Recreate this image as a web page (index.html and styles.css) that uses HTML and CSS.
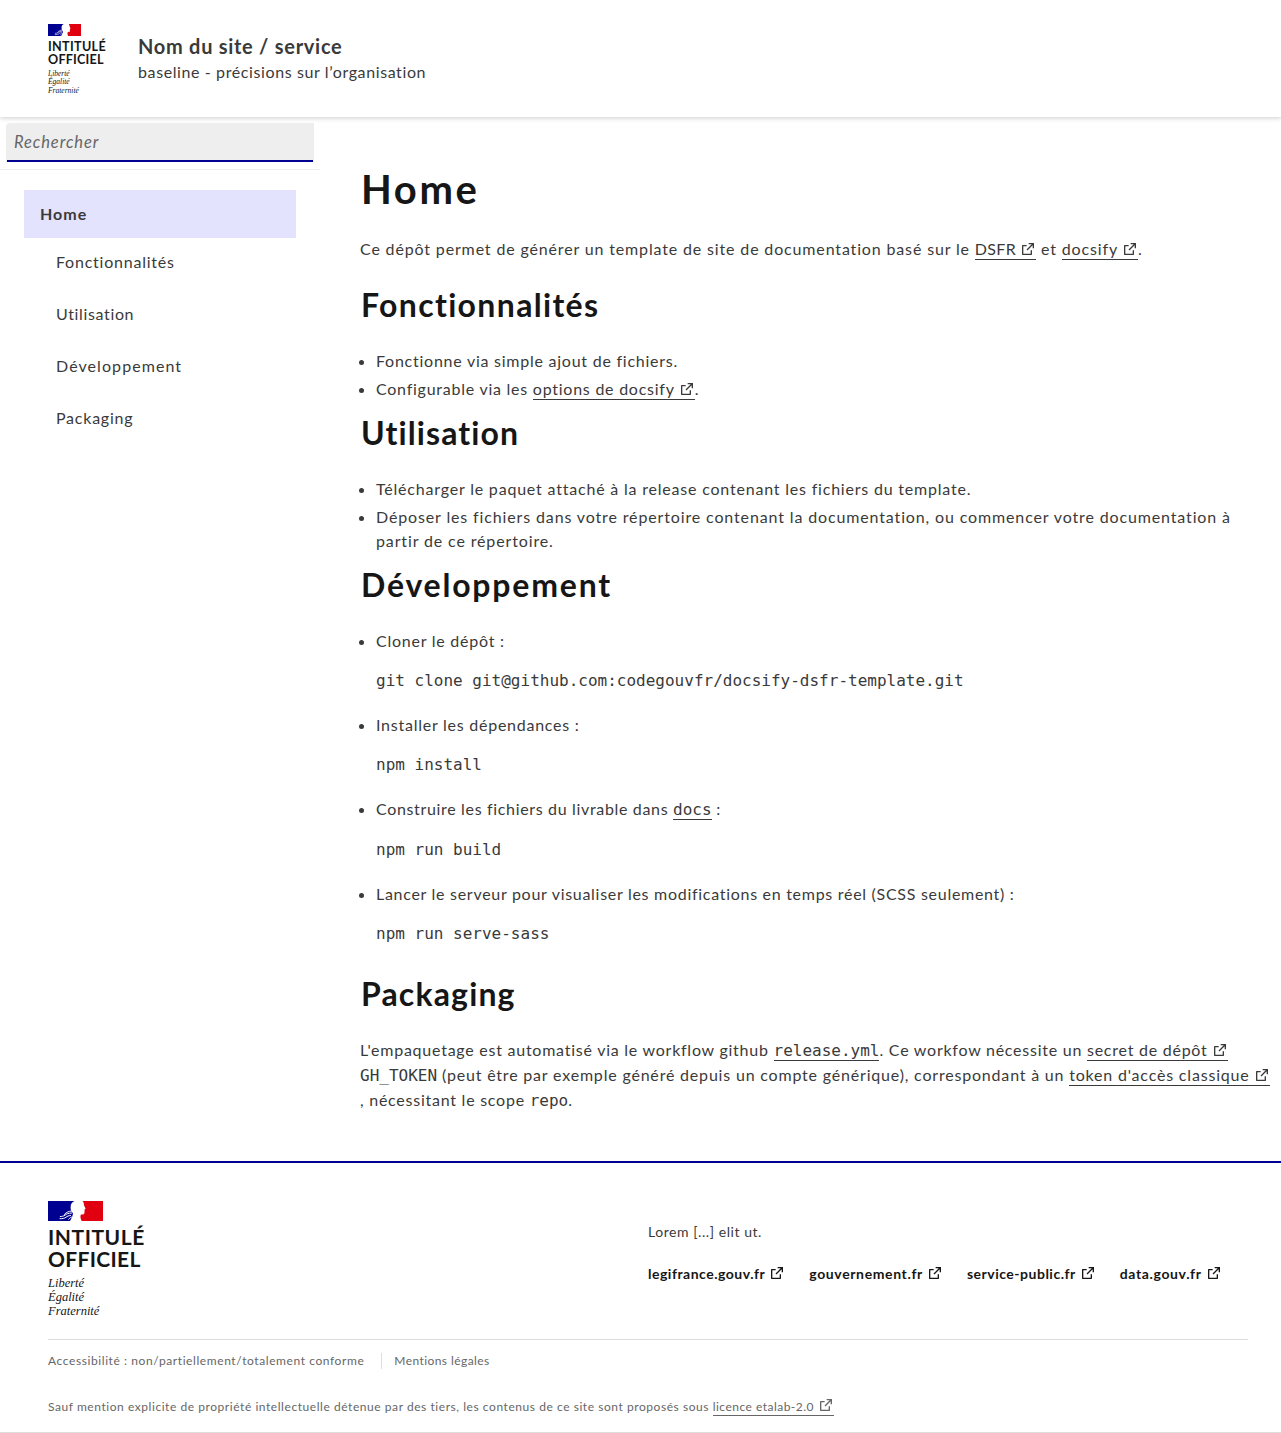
FILE: index.html
```html
<!DOCTYPE html>
<html lang="fr">
<head>
<meta charset="utf-8">
<title>Nom du site / service</title>
<link rel="stylesheet" href="styles.css">
</head>
<body>
<svg class="sprite" aria-hidden="true">
  <symbol id="ext" viewBox="0 0 24 24"><path d="M10 6v2H5v11h11v-5h2v6a1 1 0 0 1-1 1H4a1 1 0 0 1-1-1V7a1 1 0 0 1 1-1h6Zm11-3v8h-2V6.413l-7.793 7.794-1.414-1.414L17.585 5H13V3h8Z"/></symbol>
  <symbol id="flag" viewBox="0 0 55 20">
    <path fill="#fff" d="M0 0h55v20H0z"/>
    <path fill="#000091" d="M0 0h26.500C24 1.200 22.800 3 22.700 5c-.2 2 0 3.500.6 5l1.700 2.500-.8 3.500L22 20H0z"/>
    <path fill="none" stroke="#fff" stroke-width="1" stroke-linecap="round" d="M23.500 10c-3 .4-5 1.200-7 3.300M23.500 12c-3 .2-4.800.8-6.500 2.200-1.500 1-3 1.300-4.700 1.300M22.500 14.500c-2 .1-3.200.8-4.500 1.800-1.500 1-3.500 1.400-6 1.400M24 16c-1.200.2-2.200 1.100-3.300 2.200"/>
    <path fill="#e1000f" d="M55 0H34.500c.9.900 1.400 2.200 1.400 3.500.2 1.400 1 2.700 1.700 4.200-.2.600-1 .7-1.200 1 .3.800.4 1.500 0 2.200.2.800-.1 1.300-.3 2-.6.700-2 .4-3.200.7-.9 1.800-.4 4 .8 6.400H55z"/>
  </symbol>
</svg>
<header class="header">
  <div class="logo">
    <svg class="flag"><use href="#flag"/></svg>
    <p class="official"><span>INTITULÉ</span><span class="second">OFFICIEL</span></p>
    <p class="motto">Liberté<br>Égalité<br>Fraternité</p>
  </div>
  <div>
    <p class="site-name">Nom du site / service</p>
    <p class="baseline">baseline - précisions sur l’organisation</p>
  </div>
</header>
<div class="layout">
  <aside class="sidebar">
    <div class="search"><input class="search-input" type="search" placeholder="Rechercher"></div>
    <nav class="nav">
      <a class="nav-home">Home</a>
      <a class="nav-sub">Fonctionnalités</a>
      <a class="nav-sub nav-tight">Utilisation</a>
      <a class="nav-sub nav-wide">Développement</a>
      <a class="nav-sub">Packaging</a>
    </nav>
  </aside>
  <main class="content">
    <h1>Home</h1>
    <p class="intro">Ce dépôt permet de générer un template de site de documentation basé sur le <a class="link link-dsfr">DSFR<svg class="ext"><use href="#ext"/></svg></a> et <a class="link">docsify<svg class="ext"><use href="#ext"/></svg></a>.</p>
    <h2>Fonctionnalités</h2>
    <ul>
      <li>Fonctionne via simple ajout de fichiers.</li>
      <li>Configurable via les <a class="link">options de docsify<svg class="ext"><use href="#ext"/></svg></a>.</li>
    </ul>
    <h2 class="h-use">Utilisation</h2>
    <ul>
      <li class="li-download">Télécharger le paquet attaché à la release contenant les fichiers du template.</li>
      <li class="li-drop">Déposer les fichiers dans votre répertoire contenant la documentation, ou commencer votre documentation à<br>partir de ce répertoire.</li>
    </ul>
    <h2 class="h-dev">Développement</h2>
    <ul>
      <li>Cloner le dépôt :<pre>git clone git@github.com:codegouvfr/docsify-dsfr-template.git</pre></li>
      <li>Installer les dépendances :<pre>npm install</pre></li>
      <li class="li-build">Construire les fichiers du livrable dans <a class="link"><code>docs</code></a> :<pre>npm run build</pre></li>
      <li class="li-serve">Lancer le serveur pour visualiser les modifications en temps réel (SCSS seulement) :<pre>npm run serve-sass</pre></li>
    </ul>
    <h2 class="h-pack">Packaging</h2>
    <p class="pack">L'empaquetage est automatisé via le workflow github <a class="link"><code>release.yml</code></a>. Ce workfow nécessite un <a class="link">secret de dépôt<svg class="ext"><use href="#ext"/></svg></a><br><span class="pack-token"><code>GH_TOKEN</code> (peut être par exemple généré depuis un compte générique), correspondant à un <a class="link">token d'accès classique<svg class="ext"><use href="#ext"/></svg></a></span><br>, nécessitant le scope <code>repo</code>.</p>
  </main>
</div>
<footer class="footer">
  <div class="footer-body">
    <div class="logo logo-lg">
      <svg class="flag"><use href="#flag"/></svg>
      <p class="official"><span>INTITULÉ</span><span class="second">OFFICIEL</span></p>
      <p class="motto">Liberté<br>Égalité<br>Fraternité</p>
    </div>
    <div class="footer-content">
      <p class="footer-desc">Lorem [...] elit ut.</p>
      <div class="footer-links">
        <a>legifrance.gouv.fr<svg class="ext"><use href="#ext"/></svg></a>
        <a class="wide">gouvernement.fr<svg class="ext"><use href="#ext"/></svg></a>
        <a>service-public.fr<svg class="ext"><use href="#ext"/></svg></a>
        <a class="wide">data.gouv.fr<svg class="ext"><use href="#ext"/></svg></a>
      </div>
    </div>
  </div>
  <div class="footer-bottom">
    <div class="legal-links"><a>Accessibilité : non/partiellement/totalement conforme</a><a>Mentions légales</a></div>
    <p class="licence">Sauf mention explicite de propriété intellectuelle détenue par des tiers, les contenus de ce site sont proposés sous <a class="link">licence etalab-2.0<svg class="ext"><use href="#ext"/></svg></a></p>
  </div>
</footer>
</body>
</html>
```
FILE: styles.css
```css
* { box-sizing: border-box; }
body {
  margin: 0;
  background: #fff;
  color: #3a3a3a;
  font: 16px/24px Lato, "Liberation Sans", sans-serif;
  letter-spacing: .047em;
  font-variant-ligatures: none;
}
p, h1, h2, ul, pre { margin: 0; }
.sprite { display: none; }

.header {
  position: relative;
  display: flex;
  height: 117px;
  padding: 24px 48px 0;
  background: #fff;
  box-shadow: 0 1px 5px rgba(0, 0, 18, .2);
}
.header .logo { width: 90px; }
.flag { display: block; width: 33px; height: 12px; }
.official {
  margin-top: 4px;
  color: #161616;
  font-weight: 700;
  font-size: 12.6px;
  line-height: 13px;
  letter-spacing: .026em;
}
.official span { display: block; }
.official .second { letter-spacing: .016em; }
.motto {
  margin-top: 4px;
  color: #161616;
  font: italic 7.5px/8.4px "Liberation Serif", serif;
  letter-spacing: 0;
}
.logo-lg .flag { width: 55px; height: 20px; }
.logo-lg .official { margin-top: 5px; font-size: 21px; line-height: 22px; }
.logo-lg .motto { margin-top: 6px; font-size: 12.5px; line-height: 14px; }
.site-name { margin-top: 8px; font-size: 20px; line-height: 28px; font-weight: 700; letter-spacing: .036em; }
.baseline { letter-spacing: .038em; }

.layout { display: flex; height: 1044px; }
.sidebar { width: 320px; flex: none; }
.search { height: 53px; padding: 6px; border-bottom: 1px solid #eee; }
.search-input {
  display: block;
  width: 308px;
  height: 39px;
  padding: 0 7px 2px;
  border: 1px solid #eee;
  border-bottom: 0;
  border-radius: 4px 0 0 0;
  background: #eee;
  box-shadow: inset 0 -2px #000091;
  font: inherit;
  font-size: 16.5px;
  letter-spacing: .055em;
  appearance: none;
  outline: 0;
}
.search-input::placeholder { color: #666; font-style: italic; opacity: 1; }
.nav { display: flex; flex-direction: column; padding: 20px 24px; }
.nav-home { padding: 12px 16px; background: #e3e3fd; font-weight: 700; letter-spacing: .065em; }
.nav-sub { padding: 12px 32px; margin-bottom: 4px; letter-spacing: .048em; }
.nav-tight { letter-spacing: .04em; }
.nav-wide { letter-spacing: .067em; }

.content { flex: 1; padding: 48px 0 0 40px; white-space: nowrap; }
h1, h2 { padding-left: 1px; color: #161616; font-weight: 700; margin-bottom: 24px; }
h1 { font-size: 40px; line-height: 48px; letter-spacing: .066em; }
h2 { font-size: 32px; line-height: 40px; letter-spacing: .042em; }
.h-use { letter-spacing: .034em; }
.h-dev { letter-spacing: .056em; }
.h-pack { letter-spacing: .036em; }
.intro { margin-bottom: 24px; letter-spacing: .053em; }
.link-dsfr { letter-spacing: .02em; }
ul { padding-left: 16px; margin-bottom: 8px; }
li { padding-bottom: 4px; }
.li-download { letter-spacing: .05em; }
.li-drop { letter-spacing: .054em; }
.li-build { letter-spacing: .0415em; }
.li-serve { letter-spacing: .0445em; }
pre, code { font-family: "DejaVu Sans Mono", monospace; font-size: 16px; letter-spacing: 0; }
pre { margin: 16px 0; }
.li-build pre { margin-top: 17px; }
code { line-height: 20px; }
.pack { margin-top: -1px; line-height: 25px; }
.pack-token { letter-spacing: .0505em; }
.link { box-shadow: 0 1px #3a3a3a; padding-bottom: 1px; }
.ext { width: 16px; height: 16px; margin-left: 4px; fill: currentColor; vertical-align: -2px; }

.footer { height: 272px; border-top: 2px solid #000091; border-bottom: 1px solid #ddd; padding: 38px 33px 0 48px; }
.footer-body { display: flex; height: 138px; }
.logo-lg { width: 600px; }
.footer-content { padding-top: 19px; font-size: 14px; white-space: nowrap; }
.footer-desc { letter-spacing: .04em; }
.footer-links { display: flex; gap: 24px; margin-top: 18px; color: #161616; font-weight: 700; letter-spacing: .036em; }
.footer-links .wide { letter-spacing: .045em; }
.footer-bottom { border-top: 1px solid #ddd; color: #666; font-size: 12px; line-height: 20px; white-space: nowrap; }
.legal-links { display: flex; align-items: center; padding-top: 13px; line-height: 16px; letter-spacing: .049em; }
.legal-links a + a { margin-left: 17px; padding-left: 12px; border-left: 1px solid #ddd; letter-spacing: .035em; }
.licence { margin-top: 28px; letter-spacing: .0463em; }
.licence .link { box-shadow: 0 1px #666; letter-spacing: .04em; }
```
